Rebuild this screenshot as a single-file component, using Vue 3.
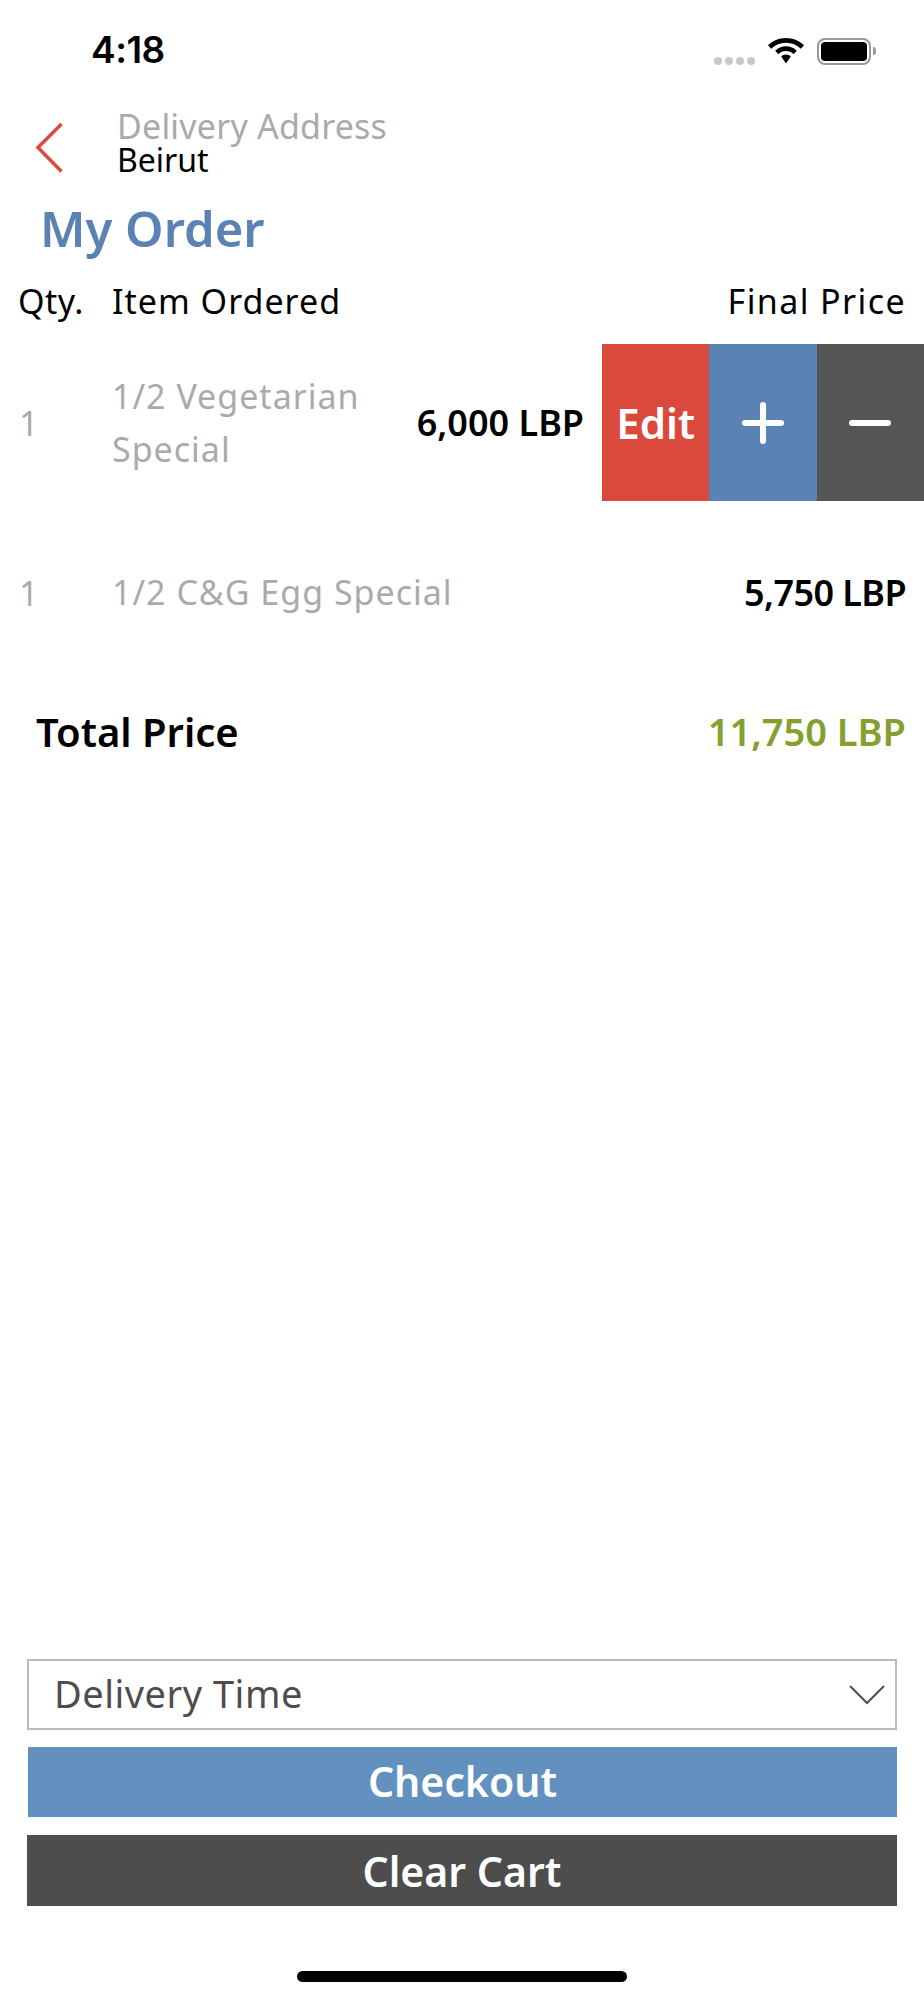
<script setup>
const items = [
  { qty: '1', name: '1/2 Vegetarian Special', price: '6,000 LBP', open: true },
  { qty: '1', name: '1/2 C&G Egg Special', price: '5,750 LBP', open: false },
]
</script>

<template>
  <div class="screen">
    <div class="status">
      <span class="time">4:18</span>
      <div class="status-icons">
        <span class="dots"><i></i><i></i><i></i><i></i></span>
        <svg class="wifi" width="36" height="26" viewBox="0 0 36 26">
          <path d="M18 0C25 0 31.500 2.800 36 7.300L32.800 10.800C29 7 23.800 4.800 18 4.800C12.200 4.800 7 7 3.200 10.800L0 7.300C4.500 2.800 11 0 18 0Z" />
          <path d="M18 8.300C22.300 8.300 26 10 28.800 12.700L25.600 16.200C23.600 14.300 21 13.100 18 13.100C15 13.100 12.400 14.300 10.400 16.200L7.200 12.700C10 10 13.700 8.300 18 8.300Z" />
          <path d="M18 16.600C19.800 16.600 21.400 17.300 22.800 18.500L18 25.500L13.200 18.500C14.600 17.300 16.200 16.600 18 16.600Z" />
        </svg>
        <span class="battery"><span class="charge"></span></span>
        <span class="nub"></span>
      </div>
    </div>

    <div class="address">
      <svg class="back" width="28" height="52" viewBox="0 0 28 52" fill="none">
        <path d="M25.500 2L2 25.500L25.500 49.500" stroke="#da4a3c" stroke-width="3.500" />
      </svg>
      <div class="address-text">
        <div class="address-label">Delivery Address</div>
        <div class="address-city">Beirut</div>
      </div>
    </div>

    <h1 class="title">My Order</h1>

    <div class="heads">
      <span class="col-qty">Qty.</span>
      <span class="col-name">Item Ordered</span>
      <span class="col-final">Final Price</span>
    </div>

    <div v-for="item in items" :key="item.name" class="row" :class="{ open: item.open }">
      <span class="col-qty muted">{{ item.qty }}</span>
      <span class="col-name muted name">{{ item.name }}</span>
      <span class="price">{{ item.price }}</span>
      <div v-if="item.open" class="actions">
        <span class="act edit">Edit</span>
        <span class="act plus">
          <svg width="42" height="42" viewBox="0 0 42 42"><path d="M21 3V39M3 21H39" stroke="#fff" stroke-width="6" stroke-linecap="round" /></svg>
        </span>
        <span class="act minus">
          <svg width="42" height="42" viewBox="0 0 42 42"><path d="M3 21H39" stroke="#fff" stroke-width="6" stroke-linecap="round" /></svg>
        </span>
      </div>
    </div>

    <div class="total">
      <span>Total Price</span>
      <span class="total-value">11,750 LBP</span>
    </div>

    <div class="spacer"></div>

    <div class="footer">
      <div class="select">
        <span class="select-text">Delivery Time</span>
        <svg width="36" height="20" viewBox="0 0 36 20" fill="none">
          <path d="M1 1L18 18L35 1" stroke="#4d4d4d" stroke-width="2" />
        </svg>
      </div>
      <div class="btn checkout">Checkout</div>
      <div class="btn clear">Clear Cart</div>
    </div>

    <div class="home-wrap"><div class="home"></div></div>
  </div>
</template>

<style>
html, body { margin: 0; background: #fff; }
</style>

<style scoped>
.screen {
  width: 924px;
  height: 2000px;
  display: flex;
  flex-direction: column;
  background: #fff;
  color: #000;
  font-family: "Noto Sans", "Open Sans", sans-serif;
  overflow: hidden;
}
.status {
  height: 117px;
  flex: none;
  display: flex;
  align-items: flex-start;
  justify-content: space-between;
  padding: 28px 48px 0 91px;
  box-sizing: border-box;
}
.time {
  font-family: Inter, sans-serif;
  font-size: 37px;
  font-weight: 600;
  line-height: 44px;
  letter-spacing: -0.5px;
}
.status-icons {
  display: flex;
  align-items: center;
  margin-top: 9px;
}
.dots { display: flex; gap: 3px; margin-top: 20px; margin-right: 13px; }
.dots i { width: 8px; height: 8px; border-radius: 50%; background: #c8c8c8; }
.wifi { fill: #000; margin-right: 13px; }
.battery {
  width: 54px;
  height: 27px;
  box-sizing: border-box;
  border: 2px solid #999;
  border-radius: 8px;
  padding: 2px;
  display: flex;
}
.charge { flex: 1; background: #000; border-radius: 4px; }
.nub { width: 3px; height: 8px; background: #999; border-radius: 0 3px 3px 0; margin-left: 2px; }
.address {
  display: flex;
  align-items: center;
  height: 62px;
  padding-left: 36px;
  flex: none;
}
.address-text { margin-left: 53px; margin-top: -10px; }
.address-label { font-size: 34px; line-height: 33px; color: #aaa; letter-spacing: 0.2px; }
.address-city { font-size: 32px; line-height: 33px; }
.title {
  margin: 17px 0 0;
  padding-left: 40px;
  font-size: 49px;
  line-height: 64px;
  font-weight: 600;
  color: #5a82b4;
  flex: none;
}
.heads {
  display: flex;
  align-items: center;
  height: 50px;
  margin-top: 16px;
  margin-bottom: 18px;
  padding: 0 18px 0 18px;
  font-size: 34px;
  letter-spacing: 1px;
  flex: none;
}
.heads .col-qty { letter-spacing: 0.5px; width: 94px; }
.col-qty { width: 93px; flex: none; }
.col-final { margin-left: auto; letter-spacing: 1.4px; }
.row {
  display: flex;
  align-items: center;
  box-sizing: border-box;
  padding: 0 18px 0 19px;
  height: 157px;
  font-size: 34px;
  flex: none;
  position: relative;
}
.row:not(.open) { height: 186px; padding-bottom: 3px; }
.row:not(.open) .price { letter-spacing: -0.6px; }
.muted { color: #aaa; }
.name { flex: 1; min-width: 0; line-height: 53px; letter-spacing: 1px; }
.open .name { max-width: 280px; flex: none; }
.price { font-weight: 600; font-size: 36px; margin-left: auto; }
.open .price { margin-right: 322px; }
.actions {
  position: absolute;
  right: 0;
  top: 0;
  bottom: 0;
  display: flex;
  width: 322px;
}
.act {
  flex: 1;
  display: flex;
  align-items: center;
  justify-content: center;
  color: #fff;
  font-size: 42px;
  font-weight: 600;
}
.edit { background: #da4a3c; }
.plus { background: #5a82b4; }
.minus { background: #555; }
.total {
  display: flex;
  justify-content: space-between;
  align-items: center;
  padding: 0 18px 0 36px;
  margin-top: 9px;
  height: 70px;
  font-size: 40px;
  font-weight: 600;
  flex: none;
}
.total-value { color: #85a02f; font-size: 38px; }
.spacer { flex: 1; }
.footer {
  display: flex;
  flex-direction: column;
  padding: 0 27px;
  flex: none;
}
.select {
  height: 71px;
  box-sizing: border-box;
  border: 2px solid #bbb;
  display: flex;
  align-items: center;
  justify-content: space-between;
  padding: 0 10px 0 25px;
  color: #4d4d4d;
  font-size: 38px;
  letter-spacing: 0.5px;
}
.select-text { margin-bottom: 3px; }
.btn {
  display: flex;
  align-items: center;
  justify-content: center;
  box-sizing: border-box;
  color: #fff;
  font-size: 41px;
  font-weight: 600;
}
.checkout { background: #6391bf; margin-top: 17px; margin-left: 1px; height: 70px; padding-bottom: 2px; }
.clear { background: #4d4d4d; margin-top: 18px; height: 71px; }
.home-wrap {
  height: 94px;
  flex: none;
  display: flex;
  justify-content: center;
  padding-top: 65px;
  box-sizing: border-box;
}
.home { width: 330px; height: 11px; border-radius: 6px; background: #000; }
</style>
